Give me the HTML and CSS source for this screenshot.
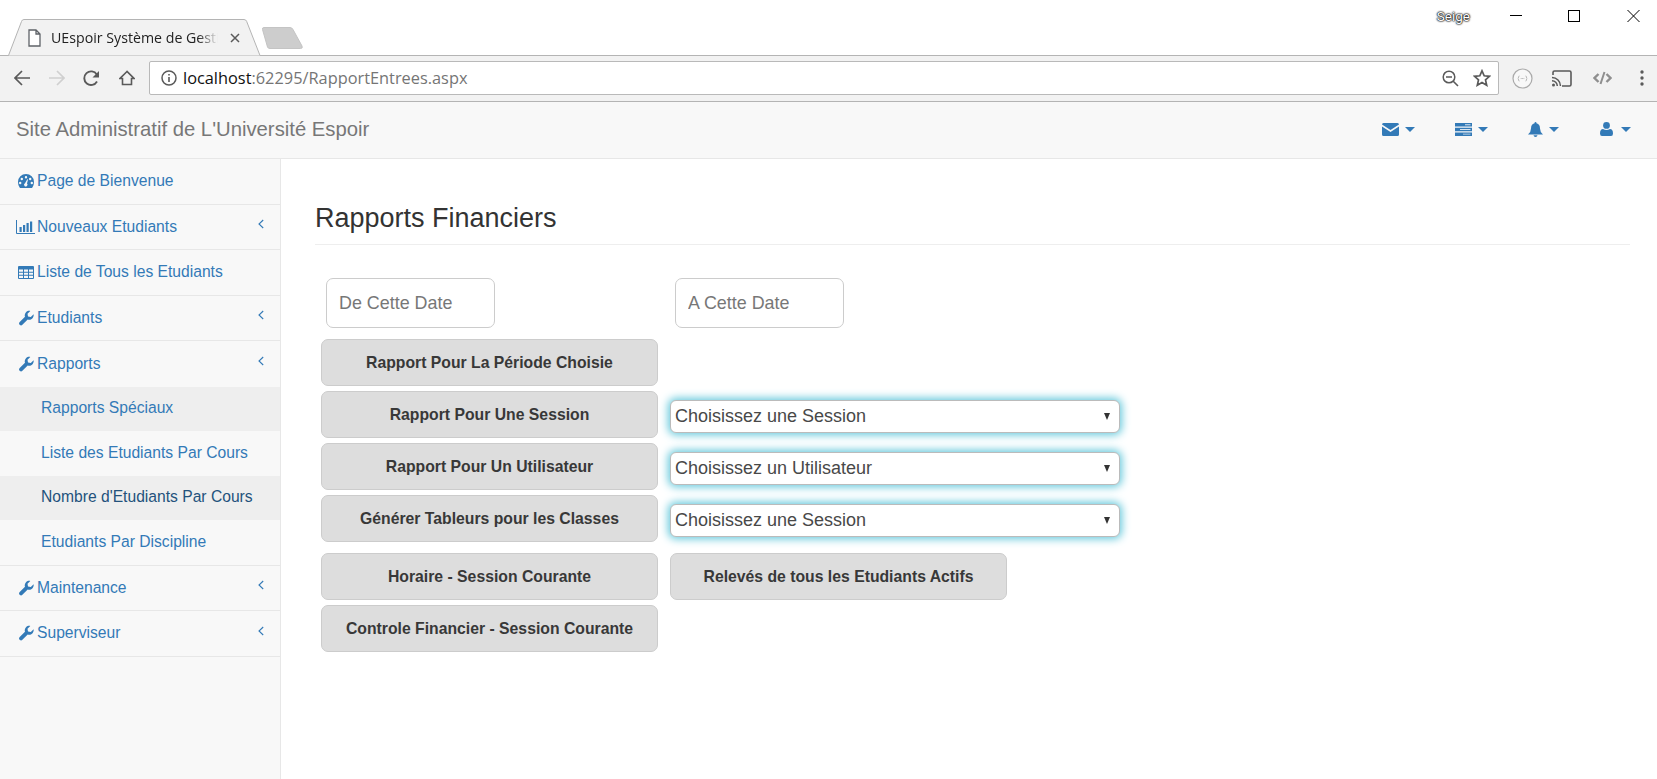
FILE: index.html
```html
<!DOCTYPE html>
<html lang="fr">
<head>
<meta charset="utf-8">
<title>UEspoir Système de Gestion</title>
<link rel="stylesheet" href="styles.css">
</head>
<body>
<div class="tabstrip">
  <div class="tab">
    <svg class="tab-shape" width="258" height="37" viewBox="0 0 258 37"><path d="M0 36.500h2.500L15.500 2.500Q16 .5 18 .5H238Q240 .5 240.700 2.500L254 36.500H258V37H0z" fill="#f2f2f2" stroke="#b4b4b4"/></svg>
    <svg class="tab-doc" width="13" height="18" viewBox="0 0 13 18"><path d="M1 1h7l4 4v12H1zM8 1v4h4" fill="#fff" stroke="#5f6368" stroke-width="1.300"/></svg>
    <span class="tab-title">UEspoir Système de Gesti</span>
    <svg class="tab-close" width="10" height="10" viewBox="0 0 10 10"><path d="M1 1l8 8M9 1l-8 8" stroke="#5a5a5a" stroke-width="1.500"/></svg>
  </div>
  <svg class="newtab" width="44" height="24" viewBox="0 0 44 24"><path d="M1.500 2.500Q1 .5 3 .5H29Q31 .5 32 2.500L41 19Q42 21.500 39.500 21.500H9Q7 21.500 6.500 20z" fill="#cdcdcd" stroke="#c4c4c4"/></svg>
  <div class="strip-spacer"></div>
  <span class="profile">Seige</span>
  <div class="winctl">
    <svg width="58" height="24" viewBox="0 0 58 24"><path d="M0 15.500h12" stroke="#000"/></svg>
    <svg width="59" height="24" viewBox="0 0 59 24"><rect x=".5" y="10.500" width="11" height="11" fill="none" stroke="#000"/></svg>
    <svg width="18" height="24" viewBox="0 0 18 24"><path d="M.5 10l12 12M12.500 10l-12 12" stroke="#000" fill="none"/></svg>
  </div>
</div>

<div class="toolbar">
  <span class="tool"><svg width="16" height="16" viewBox="0 0 16 16"><path d="M16 8H1.500M8 1L1 8l7 7" fill="none" stroke="#5a5a5a" stroke-width="1.700"/></svg></span>
  <span class="tool"><svg width="16" height="16" viewBox="0 0 16 16"><path d="M0 8h14.500M8 1l7 7-7 7" fill="none" stroke="#d0d0d0" stroke-width="1.700"/></svg></span>
  <span class="tool"><svg width="17" height="17" viewBox="0 0 17 17"><path d="M14 11.500A6.800 6.800 0 1 1 13.800 4.500" fill="none" stroke="#5a5a5a" stroke-width="1.900"/><path d="M16 1v6.500H9.500z" fill="#5a5a5a"/></svg></span>
  <span class="tool"><svg width="16" height="16" viewBox="0 0 16 16"><path d="M8 1.500L1 8.500h2.500v6h9v-6H15z" fill="none" stroke="#5a5a5a" stroke-width="1.600"/></svg></span>
  <div class="omnibox">
    <svg class="omni-info" width="16" height="16" viewBox="0 0 16 16"><circle cx="8" cy="8" r="7" fill="none" stroke="#5a5a5a" stroke-width="1.500"/><path d="M8 7v5M8 4v1.600" stroke="#5a5a5a" stroke-width="1.600"/></svg>
    <span class="omni-url"><span class="omni-host">localhost</span>:62295/RapportEntrees.aspx</span>
    <svg class="omni-zoom" width="17" height="17" viewBox="0 0 17 17"><circle cx="7" cy="7" r="5.800" fill="none" stroke="#5a5a5a" stroke-width="1.500"/><path d="M4 7h6M11 11l5 5" stroke="#5a5a5a" stroke-width="1.600"/></svg>
    <svg class="omni-star" width="18" height="18" viewBox="0 0 18 18"><path d="M9 1.800l2.200 5 5.300.5-4 3.600 1.200 5.300L9 13.400l-4.700 2.800 1.200-5.300-4-3.600 5.300-.5z" fill="none" stroke="#5a5a5a" stroke-width="1.700"/></svg>
  </div>
  <span class="action"><svg width="21" height="21" viewBox="0 0 21 21"><circle cx="10.500" cy="10.500" r="9.500" fill="#f8f8f8" stroke="#aaa" stroke-width="1.200"/><path d="M7.500 8Q6.500 8 6.500 9v1l-.7.500.7.500v1q0 1 1 1M13.500 8q1 0 1 1v1l.7.500-.7.500v1q0 1-1 1" fill="none" stroke="#bbb"/><path d="M8.700 10.500h3.600" stroke="#bbb" stroke-dasharray="1 .4"/></svg></span>
  <span class="action"><svg width="20" height="17" viewBox="0 0 20 17"><path d="M1 5V2.500Q1 1 2.500 1h15Q19 1 19 2.500v12q0 1.500-1.500 1.500H10" fill="none" stroke="#5a5a5a" stroke-width="1.600"/><path d="M0 7.500A8.500 8.500 0 0 1 8.500 16M0 10.700A5.300 5.300 0 0 1 5.300 16" fill="none" stroke="#5a5a5a" stroke-width="1.500"/><circle cx="1.500" cy="15" r="1.500" fill="#5a5a5a"/></svg></span>
  <span class="action"><svg width="19" height="14" viewBox="0 0 19 14"><path d="M5.500 3L1.500 7l4 4M13.500 3l4 4-4 4" fill="none" stroke="#8f8f8f" stroke-width="2.400"/><path d="M11.500 1L7.500 13" stroke="#8f8f8f" stroke-width="2"/></svg></span>
  <span class="action action-dots"><svg width="4" height="16" viewBox="0 0 4 16"><circle cx="2" cy="2" r="1.700" fill="#5a5a5a"/><circle cx="2" cy="8" r="1.700" fill="#5a5a5a"/><circle cx="2" cy="14" r="1.700" fill="#5a5a5a"/></svg></span>
</div>

<header class="navbar">
  <span class="brand">Site Administratif de L'Université Espoir</span>
  <div class="nav-links">
    <span class="nav-item"><svg width="17" height="13" viewBox="0 0 17 13"><path d="M0 1.500Q0 0 1.500 0h14Q17 0 17 1.500L8.500 7zM0 3.500l8.500 5.500L17 3.500v8Q17 13 15.500 13h-14Q0 13 0 11.500z" fill="#337ab7"/></svg><i class="caret"></i></span>
    <span class="nav-item"><svg width="17" height="13" viewBox="0 0 17 13"><path d="M0 0h17v3.600H0zM0 4.700h17v3.600H0zM0 9.400h17V13H0z" fill="#337ab7"/><path d="M10 1.300h5.500v.9H10zM5 6h10.500v.9H5zM8 10.700h7.500v.9H8z" fill="#d7e4f0"/></svg><i class="caret"></i></span>
    <span class="nav-item"><svg width="15" height="15" viewBox="0 0 15 15"><path d="M7.500 0Q8.500 0 8.500 1.200Q12 2 12 6.500Q12 10 15 12.500H0Q3 10 3 6.500Q3 2 6.500 1.200Q6.500 0 7.500 0zM5.500 13.300h4Q9.300 15 7.500 15T5.500 13.300z" fill="#337ab7"/></svg><i class="caret"></i></span>
    <span class="nav-item nav-item-user"><svg width="13" height="14" viewBox="0 0 13 14"><circle cx="6.500" cy="3.400" r="3.400" fill="#337ab7"/><path d="M0 11.500Q0 7 3 7Q6.500 9.200 10 7Q13 7 13 11.500Q13 14 11 14H2Q0 14 0 11.500z" fill="#337ab7"/></svg><i class="caret"></i></span>
  </div>
</header>

<div class="layout">
  <aside class="sidebar">
    <a class="side-row"><svg class="side-icon" width="17" height="14" viewBox="0 0 16 14"><path fill-rule="evenodd" d="M8 0a8 8 0 0 1 8 8q0 3-1.500 5.300l-.5.700H2l-.5-.7Q0 11 0 8a8 8 0 0 1 8-8zM8 2a1.200 1.200 0 1 0 0 2.400A1.200 1.200 0 0 0 8 2zM3.800 3.800a1.200 1.200 0 1 0 0 2.400 1.200 1.200 0 0 0 0-2.400zM12.200 3.800a1.200 1.200 0 1 0 0 2.400 1.200 1.200 0 0 0 0-2.400zM2.200 7.800a1.200 1.200 0 1 0 0 2.400 1.200 1.200 0 0 0 0-2.400zM13.800 7.800a1.200 1.200 0 1 0 0 2.400 1.200 1.200 0 0 0 0-2.400zM9.300 5.200L7 9.200a1.700 1.700 0 1 0 2 .3L10 5.400z" fill="#337ab7"/></svg><span>Page de Bienvenue</span></a>
    <a class="side-row"><svg class="side-icon side-chart" width="19" height="14" viewBox="0 0 19 14"><path d="M.5 0v13.500H19" fill="none" stroke="#337ab7"/><path d="M3.500 7h2.200v5H3.500zM7 5h2.200v7H7zM10.500 3h2.200v9h-2.200zM14 1.500h2.200V12H14z" fill="#337ab7"/></svg><span>Nouveaux Etudiants</span><svg class="chev" width="6" height="10" viewBox="0 0 6 10"><path d="M5.200 1L1 5l4.200 4" fill="none" stroke="#337ab7" stroke-width="1.100"/></svg></a>
    <a class="side-row"><svg class="side-icon" width="16" height="13" viewBox="0 0 16 13"><path fill-rule="evenodd" d="M1 0h14q1 0 1 1v11q0 1-1 1H1q-1 0-1-1V1q0-1 1-1zM1 3.500v2.200h4V3.500zM6 3.500v2.200h4V3.500zM11 3.500v2.200h4V3.500zM1 6.700v2.100h4V6.700zM6 6.700v2.100h4V6.700zM11 6.700v2.100h4V6.700zM1 9.800V12h4V9.800zM6 9.800V12h4V9.800zM11 9.800V12h4V9.800z" fill="#337ab7"/></svg><span>Liste de Tous les Etudiants</span></a>
    <a class="side-row"><svg class="side-icon" width="16" height="16" viewBox="0 0 16 16"><path d="M15.600 4.200c.3 1.600-.2 3.200-1.300 4.300-1.200 1.200-3 1.600-4.600 1L4.400 14.800a1.900 1.900 0 0 1-2.700-2.700L7 6.800c-.6-1.600-.2-3.400 1-4.600C9.100 1.100 10.700.6 12.300.9L9.500 3.700l.5 2.800 2.800.5z" fill="#337ab7"/></svg><span>Etudiants</span><svg class="chev" width="6" height="10" viewBox="0 0 6 10"><path d="M5.200 1L1 5l4.200 4" fill="none" stroke="#337ab7" stroke-width="1.100"/></svg></a>
    <a class="side-row side-row-open"><svg class="side-icon" width="16" height="16" viewBox="0 0 16 16"><path d="M15.600 4.200c.3 1.600-.2 3.200-1.300 4.300-1.200 1.200-3 1.600-4.600 1L4.400 14.800a1.900 1.900 0 0 1-2.700-2.700L7 6.800c-.6-1.600-.2-3.400 1-4.600C9.100 1.100 10.700.6 12.300.9L9.500 3.700l.5 2.800 2.800.5z" fill="#337ab7"/></svg><span>Rapports</span><svg class="chev" width="6" height="10" viewBox="0 0 6 10"><path d="M5.200 1L1 5l4.200 4" fill="none" stroke="#337ab7" stroke-width="1.100"/></svg></a>
    <div class="submenu">
      <a class="sub-row sub-hover">Rapports Spéciaux</a>
      <a class="sub-row">Liste des Etudiants Par Cours</a>
      <a class="sub-row sub-active">Nombre d'Etudiants Par Cours</a>
      <a class="sub-row">Etudiants Par Discipline</a>
    </div>
    <a class="side-row"><svg class="side-icon" width="16" height="16" viewBox="0 0 16 16"><path d="M15.600 4.200c.3 1.600-.2 3.200-1.300 4.300-1.200 1.200-3 1.600-4.600 1L4.400 14.800a1.900 1.900 0 0 1-2.700-2.700L7 6.800c-.6-1.600-.2-3.400 1-4.600C9.100 1.100 10.700.6 12.300.9L9.500 3.700l.5 2.800 2.800.5z" fill="#337ab7"/></svg><span>Maintenance</span><svg class="chev" width="6" height="10" viewBox="0 0 6 10"><path d="M5.200 1L1 5l4.200 4" fill="none" stroke="#337ab7" stroke-width="1.100"/></svg></a>
    <a class="side-row"><svg class="side-icon" width="16" height="16" viewBox="0 0 16 16"><path d="M15.600 4.200c.3 1.600-.2 3.200-1.300 4.300-1.200 1.200-3 1.600-4.600 1L4.400 14.800a1.900 1.900 0 0 1-2.700-2.700L7 6.800c-.6-1.600-.2-3.400 1-4.600C9.100 1.100 10.700.6 12.300.9L9.500 3.700l.5 2.800 2.800.5z" fill="#337ab7"/></svg><span>Superviseur</span><svg class="chev" width="6" height="10" viewBox="0 0 6 10"><path d="M5.200 1L1 5l4.200 4" fill="none" stroke="#337ab7" stroke-width="1.100"/></svg></a>
  </aside>

  <main class="content">
    <h1 class="page-title">Rapports Financiers</h1>
    <div class="date-row">
      <input class="date-input" type="text" placeholder="De Cette Date">
      <input class="date-input" type="text" placeholder="A Cette Date">
    </div>
    <div class="report-grid">
      <button class="report-btn report-first">Rapport Pour La Période Choisie</button>
      <button class="report-btn report-first">Rapport Pour Une Session</button>
      <div class="select-wrap"><select class="report-select"><option>Choisissez une Session</option></select></div>
      <button class="report-btn report-first">Rapport Pour Un Utilisateur</button>
      <div class="select-wrap"><select class="report-select"><option>Choisissez un Utilisateur</option></select></div>
      <button class="report-btn report-first">Générer Tableurs pour les Classes</button>
      <div class="select-wrap"><select class="report-select"><option>Choisissez une Session</option></select></div>
      <button class="report-btn report-first row-spaced">Horaire - Session Courante</button>
      <button class="report-btn row-spaced report-second">Relevés de tous les Etudiants Actifs</button>
      <button class="report-btn report-first">Controle Financier - Session Courante</button>
    </div>
  </main>
</div>
</body>
</html>
```

FILE: styles.css
```css
* { box-sizing: border-box; }

html, body {
  margin: 0;
  height: 779px;
  overflow: hidden;
  background: #fff;
  font-family: "Liberation Sans", Arial, sans-serif;
  color: #333;
}

/* Browser window */
.tabstrip {
  display: flex;
  align-items: flex-end;
  height: 56px;
  border-bottom: 1px solid #b4b4b4;
  background: #fff;
}

.tab {
  position: relative;
  display: flex;
  align-items: center;
  width: 258px;
  height: 37px;
  margin-left: 6px;
  margin-bottom: -1px;
  padding-left: 22px;
}

.tab-shape {
  position: absolute;
  left: 0;
  top: 0;
}

.tab-doc, .tab-title, .tab-close { position: relative; }

.tab-doc { flex: none; }

.tab-title {
  flex: none;
  width: 167px;
  margin-left: 10px;
  white-space: nowrap;
  font-family: "Open Sans", sans-serif;
  font-size: 14.2px;
  color: #222;
  -webkit-mask-image: linear-gradient(to right, #000 88%, transparent 100%);
  mask-image: linear-gradient(to right, #000 88%, transparent 100%);
}

.tab-close {
  flex: none;
  margin-left: 12px;
}

.newtab {
  flex: none;
  margin-left: -3px;
  margin-bottom: 4px;
}

.strip-spacer { flex: 1; }

.profile {
  align-self: flex-start;
  margin-top: 8px;
  margin-right: 40px;
  font-family: Roboto, sans-serif;
  font-size: 13.5px;
  line-height: 17px;
  color: #fff;
  text-shadow: 0 0 2px #000, 0 0 2px #000, 0 0 1px #000;
}

.winctl {
  display: flex;
  align-self: flex-start;
  margin-right: 12px;
}

.toolbar {
  display: flex;
  align-items: center;
  height: 46px;
  padding-left: 4px;
  padding-bottom: 1px;
  background: #f2f2f2;
  border-bottom: 1px solid #b4b4b4;
}

.tool {
  display: flex;
  align-items: center;
  justify-content: center;
  width: 35px;
  height: 34px;
}

.omnibox {
  display: flex;
  align-items: center;
  width: 1350px;
  height: 34px;
  margin-left: 5px;
  padding: 0 7px 0 11px;
  background: #fff;
  border: 1px solid #b9b9b9;
  border-radius: 2px;
}

.omni-url {
  flex: 1;
  margin-left: 6px;
  font-family: "Open Sans", sans-serif;
  font-size: 16.35px;
  color: #757575;
  white-space: nowrap;
}

.omni-host { color: #111; }

.omni-zoom { margin-right: 14px; }

.action {
  display: flex;
  align-items: center;
  justify-content: center;
  width: 40px;
  height: 34px;
}

.omnibox + .action { margin-left: 3px; }

.action-dots {
  width: 35px;
  justify-content: flex-start;
  padding-left: 18px;
}

/* Site navbar */
.navbar {
  display: flex;
  align-items: center;
  justify-content: space-between;
  height: 57px;
  padding: 0 26px 2px 16px;
  background: #f8f8f8;
  border-bottom: 1px solid #e7e7e7;
}

.brand {
  font-size: 20.3px;
  color: #777;
}

.nav-links {
  display: flex;
  gap: 40px;
}

.nav-item {
  display: flex;
  align-items: center;
  gap: 6px;
  height: 16px;
}

.nav-item-user {
  gap: 8px;
  margin-left: 1px;
}

.caret {
  width: 0;
  height: 0;
  border-top: 5px solid #337ab7;
  border-left: 5px solid transparent;
  border-right: 5px solid transparent;
}

/* Page body */
.layout {
  display: flex;
  height: 620px;
}

.sidebar {
  flex: none;
  width: 281px;
  background: #f8f8f8;
  border-right: 1px solid #e7e7e7;
  font-size: 15.65px;
}

.side-row {
  display: flex;
  align-items: center;
  height: 45.5px;
  padding: 0 16px 0 17px;
  border-bottom: 1px solid #e7e7e7;
  color: #337ab7;
}

.side-row-open { border-bottom: 0; }

.side-icon {
  flex: none;
  width: 20px;
  margin-left: -1px;
  margin-right: 1px;
}

.side-chart {
  width: 21px;
  margin-left: -2px;
}

.side-row span { flex: 1; }

.chev {
  flex: none;
  margin-bottom: 5px;
}

.submenu { border-bottom: 1px solid #e7e7e7; }

.sub-row {
  display: flex;
  align-items: center;
  height: 44.5px;
  padding: 0 0 1px 41px;
  color: #337ab7;
}

.sub-hover { background: #eee; }

.sub-active {
  background: #eee;
  color: #23527c;
}

.content {
  flex: 1;
  min-width: 0;
  padding: 0 27px 0 34px;
}

.page-title {
  margin: 43px 0 33px;
  padding-bottom: 9px;
  border-bottom: 1px solid #eee;
  font-size: 27px;
  line-height: 33px;
  font-weight: 400;
  color: #333;
}

.date-row {
  display: flex;
  gap: 180px;
  margin-left: 11px;
  margin-bottom: 11px;
}

.date-input {
  width: 169px;
  height: 50px;
  padding: 0 12px;
  background: #fff;
  border: 1px solid #ccc;
  border-radius: 7px;
  font-family: inherit;
  font-size: 17.9px;
  color: #555;
}

.date-input::placeholder {
  color: #777;
  opacity: 1;
}

.report-grid {
  display: grid;
  grid-template-columns: 337px 450px;
  grid-template-rows: 47px 47px 47px 47px 53px 47px;
  column-gap: 12px;
  row-gap: 5px;
  margin-left: 6px;
}

.report-first { grid-column: 1; }

.report-btn {
  height: 47px;
  padding: 0;
  background: #ddd;
  border: 1px solid #ccc;
  border-radius: 7px;
  font-family: inherit;
  font-size: 15.75px;
  font-weight: 700;
  color: #383838;
}

.row-spaced { margin-top: 6px; }

.report-second { width: 337px; }

.select-wrap {
  position: relative;
  align-self: center;
  height: 33px;
  margin-top: 4px;
}

.select-wrap::after {
  content: "";
  position: absolute;
  top: 13px;
  right: 10px;
  width: 0;
  height: 0;
  border-top: 7px solid #333;
  border-left: 3.500px solid transparent;
  border-right: 3.500px solid transparent;
  pointer-events: none;
}

.report-select {
  display: block;
  width: 100%;
  height: 33px;
  padding: 0 4px 2px;
  -webkit-appearance: none;
  appearance: none;
  background: #fff;
  border: 1px solid #bbb;
  border-radius: 6px;
  box-shadow: 0 0 8px 2px #66c9dc;
  font-family: inherit;
  font-size: 18px;
  color: #484848;
}
```
